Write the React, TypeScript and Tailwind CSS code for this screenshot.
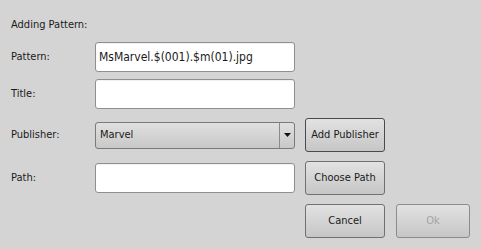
import React from "react";

const font = "font-['DejaVu_Sans_Condensed','DejaVu_Sans',sans-serif] [font-stretch:condensed]";

function Field({ value = "" }: { value?: string }) {
  return (
    <div className="flex h-[30px] w-[200px] items-center rounded-[3px] border border-[#8f8f8f] bg-white pl-[3px] text-[12px] text-[#1a1a1a] shadow-[inset_0_1px_1px_rgba(0,0,0,0.06)]">
      {value}
    </div>
  );
}

function Button({ label, width = "w-[80px]", disabled = false, strong = false }: { label: string; width?: string; disabled?: boolean; strong?: boolean }) {
  return (
    <div
      className={`flex h-[34px] ${width} items-center justify-center rounded-[3px] border bg-gradient-to-b from-[#e2e2e2] to-[#c6c6c6] text-[11px] ${
        strong ? "border-[#4a4a4a]" : disabled ? "border-[#8c8c8c]" : "border-[#707070]"
      } ${disabled ? "text-[#a4a4a4]" : "text-[#1a1a1a]"}`}
    >
      {label}
    </div>
  );
}

function Row({ label, children, h = "h-[34px]" }: { label?: string; children: React.ReactNode; h?: string }) {
  return (
    <div className={`flex ${h} items-center`}>
      <div className="w-[84px] text-[11px] text-[#1a1a1a]">{label}</div>
      {children}
    </div>
  );
}

export default function App() {
  return (
    <div className={`h-[249px] w-[481px] bg-[#d4d4d4] pl-[11px] ${font}`}>
      <div className="flex h-[42px] items-center pt-[8px] text-[11px] text-[#1a1a1a]">Adding Pattern:</div>

      <div className="flex flex-col gap-[7px]">
        <Row label="Pattern:" h="h-[30px]">
          <Field value="MsMarvel.$(001).$m(01).jpg" />
        </Row>
        <Row label="Title:" h="h-[30px]">
          <Field />
        </Row>
      </div>

      <div className="mt-[9px] flex flex-col gap-[9px]">
        <Row label="Publisher:">
          <div className="flex h-[27px] w-[200px] items-center rounded-[3px] border border-[#7a7a7a] bg-gradient-to-b from-[#e0e0e0] to-[#c8c8c8] text-[11px] text-[#1a1a1a]">
            <span className="flex-1 pl-[4px]">Marvel</span>
            <div className="flex h-full w-[15px] items-center justify-center border-l border-[#8a8a8a]">
              <svg width="7" height="4" viewBox="0 0 7 4">
                <path d="M0 0h7L3.5 4z" fill="#111" />
              </svg>
            </div>
          </div>
          <div className="ml-[10px]">
            <Button label="Add Publisher" strong />
          </div>
        </Row>
        <Row label="Path:">
          <Field />
          <div className="ml-[10px]">
            <Button label="Choose Path" />
          </div>
        </Row>
        <Row>
          <div className="w-[200px]" />
          <div className="ml-[10px] flex gap-[11px]">
            <Button label="Cancel" />
            <Button label="Ok" width="w-[74px]" disabled />
          </div>
        </Row>
      </div>
    </div>
  );
}
